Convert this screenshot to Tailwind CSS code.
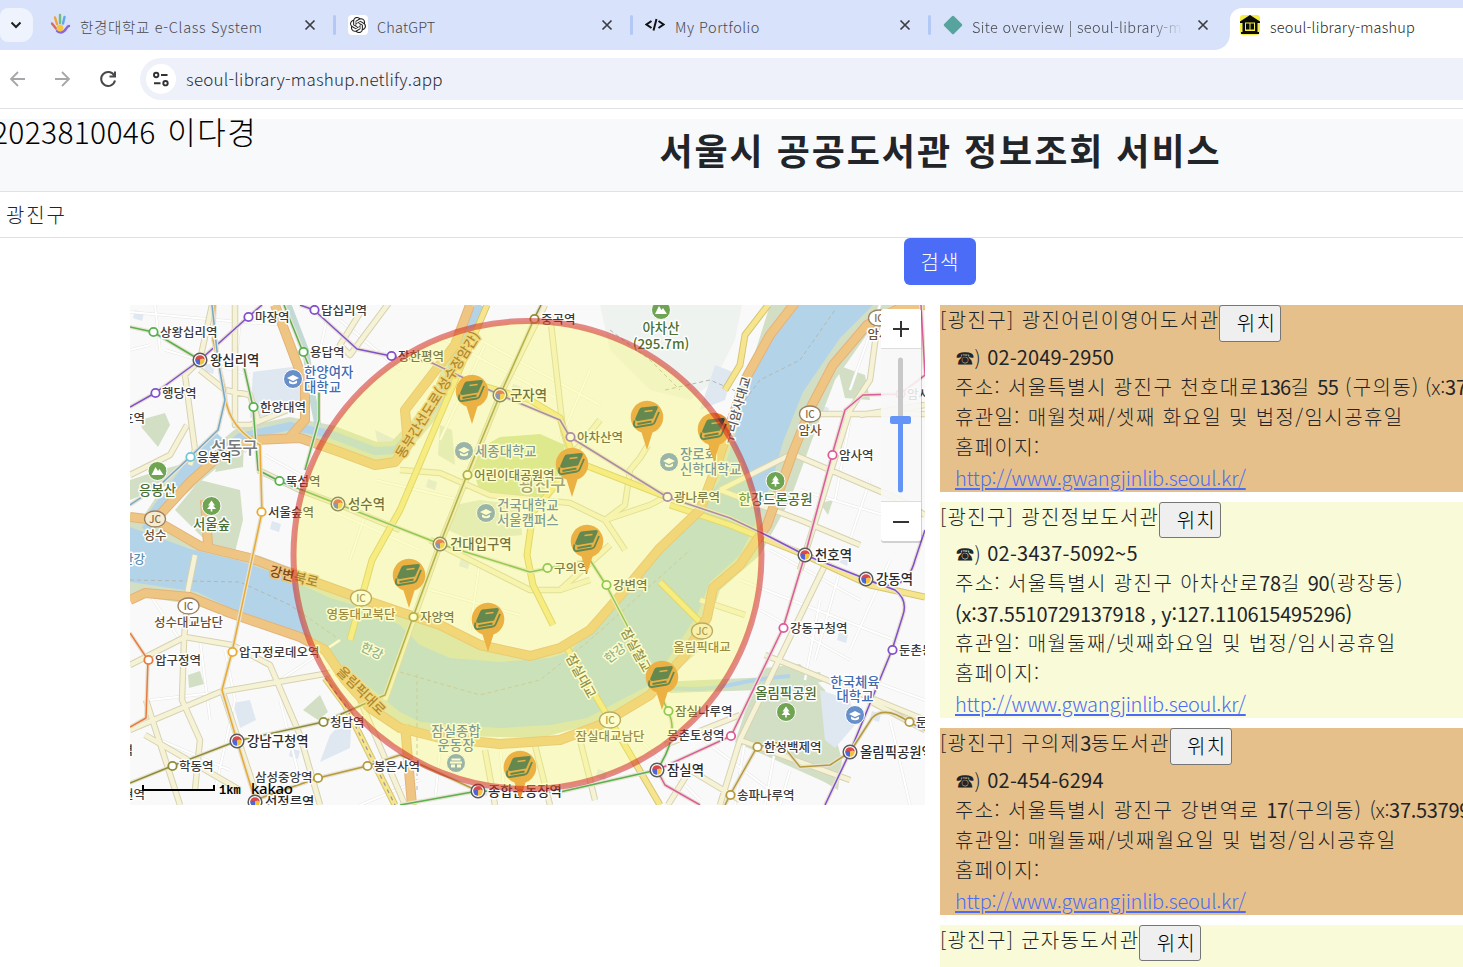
<!DOCTYPE html>
<html lang="ko">
<head>
<meta charset="utf-8">
<title>seoul-library-mashup</title>
<script src="https://cdn.jsdelivr.net/npm/@tailwindcss/browser@4"></script>
</head>
<body class="w-[1463px] h-[967px] overflow-hidden bg-white font-['Noto_Sans_CJK_KR',sans-serif] font-light text-[#212529]">
<div class="relative flex h-[967px] flex-col overflow-hidden">

  <!-- Tab strip -->
  <div class="flex h-[50px] shrink-0 bg-[#d8e2fa] text-[14.5px] text-[#46484c]">
    <div class="mt-2 flex h-[34px] w-[33px] items-center justify-center rounded-r-xl rounded-l-lg bg-[#eff3fd] pr-0.5">
      <svg width="12" height="8" viewBox="0 0 12 8" fill="none" stroke="#1f1f1f" stroke-width="2"><path d="M1.5 1.5 6 6l4.500-4.500"/></svg>
    </div>
    <div class="flex w-[303px] items-center pl-[17px]">
      <svg width="21" height="22" viewBox="0 0 21 22" fill="none" stroke-width="2.400" stroke-linecap="round" class="-mt-0.5 shrink-0"><path d="M10 2v8" stroke="#6fc078"/><path d="M5 4.500 7 11" stroke="#f0a13c"/><path d="M14.500 4 13 10.500" stroke="#64a6ee"/><path d="m2 10.500 4 5" stroke="#dc6a5e"/><path d="M19 13c-3 0-2.500 6-8 6.500-2 0-3-.5-4-1.500" stroke="#8a66d6"/><circle cx="10" cy="15" r="2.200" fill="#f6c441" stroke="#f6c441"/></svg>
      <span class="ml-[9px] flex-1 whitespace-nowrap pt-1 tracking-[0.68px]">한경대학교 e-Class System</span>
      <svg width="12" height="12" viewBox="0 0 12 12" stroke="#3c3e42" stroke-width="1.700" class="mr-[17px] shrink-0"><path d="m1.500 1.500 9 9m0-9-9 9"/></svg>
      <i class="h-5 w-[3px] rounded bg-[#b3c8f5]"></i>
    </div>
    <div class="flex w-[297px] items-center pl-3">
      <span class="flex size-5 items-center justify-center rounded bg-white"><svg width="16" height="16" viewBox="0 0 24 24" fill="#202020"><path d="M22.282 9.821a5.985 5.985 0 0 0-.516-4.910 6.046 6.046 0 0 0-6.510-2.900A6.065 6.065 0 0 0 4.981 4.180a5.985 5.985 0 0 0-3.998 2.900 6.046 6.046 0 0 0 .743 7.097 5.980 5.980 0 0 0 .510 4.911 6.051 6.051 0 0 0 6.515 2.900A5.985 5.985 0 0 0 13.260 24a6.056 6.056 0 0 0 5.772-4.206 5.990 5.990 0 0 0 3.998-2.900 6.056 6.056 0 0 0-.748-7.073zM13.260 22.430a4.476 4.476 0 0 1-2.876-1.040l.141-.081 4.779-2.758a.795.795 0 0 0 .393-.681v-6.737l2.020 1.169a.071.071 0 0 1 .038.052v5.583a4.504 4.504 0 0 1-4.495 4.494zM3.600 18.304a4.470 4.470 0 0 1-.535-3.014l.142.085 4.783 2.759a.771.771 0 0 0 .780 0l5.843-3.369v2.332a.080.080 0 0 1-.033.062L9.740 19.950a4.500 4.500 0 0 1-6.140-1.646zM2.340 7.896a4.485 4.485 0 0 1 2.366-1.973V11.600a.766.766 0 0 0 .388.677l5.815 3.355-2.020 1.168a.076.076 0 0 1-.071 0l-4.830-2.786A4.504 4.504 0 0 1 2.340 7.872zm16.597 3.855-5.833-3.387L15.119 7.200a.076.076 0 0 1 .071 0l4.830 2.791a4.494 4.494 0 0 1-.676 8.105v-5.678a.790.790 0 0 0-.407-.667zm2.010-3.023-.141-.085-4.774-2.782a.776.776 0 0 0-.785 0L9.409 9.230V6.897a.066.066 0 0 1 .028-.061l4.830-2.787a4.500 4.500 0 0 1 6.680 4.660zm-12.640 4.135-2.020-1.164a.080.080 0 0 1-.038-.057V6.075a4.500 4.500 0 0 1 7.375-3.453l-.142.080L8.704 5.460a.795.795 0 0 0-.393.681zm1.097-2.365 2.602-1.500 2.607 1.500v2.999l-2.597 1.500-2.607-1.500Z"/></svg></span>
      <span class="ml-[7px] flex-1 whitespace-nowrap pt-1 pl-0.5 tracking-[0.200px]">ChatGPT</span>
      <svg width="12" height="12" viewBox="0 0 12 12" stroke="#3c3e42" stroke-width="1.700" class="mr-[17px] shrink-0"><path d="m1.500 1.500 9 9m0-9-9 9"/></svg>
      <i class="h-5 w-[3px] rounded bg-[#b3c8f5]"></i>
    </div>
    <div class="flex w-[298px] items-center pl-3">
      <svg width="20" height="14" viewBox="0 0 20 14" fill="none" stroke="#111" stroke-width="2"><path d="M6.500 3 1.500 6.500l5 3.500M13.500 3l5 3.500-5 3.500M11.500 1 8.500 12.500"/></svg>
      <span class="ml-2.5 flex-1 whitespace-nowrap pt-1 tracking-[0.5px]">My Portfolio</span>
      <svg width="12" height="12" viewBox="0 0 12 12" stroke="#3c3e42" stroke-width="1.700" class="mr-[17px] shrink-0"><path d="m1.500 1.500 9 9m0-9-9 9"/></svg>
      <i class="h-5 w-[3px] rounded bg-[#b3c8f5]"></i>
    </div>
    <div class="flex w-[299px] items-center rounded-br-2xl pl-[11px]">
      <svg width="22" height="22" viewBox="0 0 22 22" class="shrink-0"><rect x="4" y="4" width="14" height="14" rx="1.500" fill="#57a39d" transform="rotate(45 11 11)"/></svg>
      <span class="ml-2 mr-[14px] w-[211px] overflow-hidden whitespace-nowrap pt-1 tracking-[0.32px] [mask-image:linear-gradient(to_right,black_85%,transparent)]">Site overview | seoul-library-mashup</span>
      <svg width="12" height="12" viewBox="0 0 12 12" stroke="#3c3e42" stroke-width="1.700" class="shrink-0"><path d="m1.500 1.500 9 9m0-9-9 9"/></svg>
    </div>
    <div class="relative mt-2 flex h-[42px] flex-1 items-center rounded-tl-xl bg-white pl-[10px] pb-2">
      <svg width="16" height="16" viewBox="0 0 16 16" class="absolute bottom-0 -left-4"><path d="M16 0v16H0C9 16 16 9 16 0Z" fill="#fff"/></svg>
      <svg width="20" height="20" viewBox="0 0 20 20"><rect width="20" height="20" rx="3" fill="#f2ee45"/><path d="M0 6.500 10 0l10 6.500V8H17.500v9H19v2H1v-2h1.500V8H0Z" fill="#0b0b0b"/><path d="M5 7.500h10v8.500h-10Z" fill="#f2ee45"/><path d="M6 8.500h3.500v6H6Zm4.500 0H14v6h-3.500Z" fill="#0b0b0b"/></svg>
      <span class="ml-[10px] whitespace-nowrap pt-[3px] tracking-[0.23px] text-[#1f1f1f]">seoul-library-mashup</span>
    </div>
  </div>

  <!-- Address bar -->
  <div class="flex h-[59px] shrink-0 items-center border-b border-[#dfe1e5] bg-white pl-[9px]">
    <svg width="18" height="18" viewBox="0 0 18 18" fill="none" stroke="#a5a7aa" stroke-width="1.800"><path d="M16 9H2M9 2 2 9l7 7"/></svg>
    <svg width="18" height="18" viewBox="0 0 18 18" fill="none" stroke="#a5a7aa" stroke-width="1.800" class="ml-[26px]"><path d="M2 9h14M9 2l7 7-7 7"/></svg>
    <svg width="18" height="18" viewBox="0 0 18 18" fill="none" stroke="#46484c" stroke-width="2" class="ml-[28px]"><path d="M15.300 5.500A7 7 0 1 0 16 10.500M16 1.500V6.500H10.500"/></svg>
    <div class="ml-[23px] flex h-[42px] flex-1 items-center rounded-l-full bg-[#eef1fa] pl-1.5">
      <span class="flex size-[30px] items-center justify-center rounded-full bg-white"><svg width="18" height="18" viewBox="0 0 18 18" fill="none" stroke="#303236" stroke-width="1.900"><circle cx="4.200" cy="5" r="2.200"/><path d="M9 5h6.500M2 13.200h6.500"/><circle cx="13.500" cy="13.200" r="2.200"/></svg></span>
      <span class="ml-[10px] whitespace-nowrap text-[17px] tracking-[0.2px] text-[#2b2d30]">seoul-library-mashup.netlify.app</span>
    </div>
  </div>

  <!-- Page header -->
  <header class="relative mt-[10px] flex h-[73px] shrink-0 justify-center border-b border-[#dee2e6] bg-[#f8f9fa] pl-[418px]">
    <h1 class="whitespace-nowrap text-[36px]/[61px] font-bold tracking-[1.950px] text-[#212529]">서울시 공공도서관 정보조회 서비스</h1>
    <div class="absolute -top-[11px] -left-[8px] whitespace-nowrap text-[30px]/[46px] text-black tracking-[0.300px]">2023810046 <span class="pl-[3px] text-[31px] tracking-[1.500px]">이다경</span></div>
  </header>
  <div class="flex h-[46px] shrink-0 items-center border-b border-[#dee2e6] pl-[6px] text-[20px] tracking-[1.800px]">광진구</div>
  <div class="flex h-[67px] shrink-0 items-start pl-[904px]">
    <button class="h-[47px] w-[72px] rounded-md bg-[#4a6cf7] text-[20px] tracking-[1.200px] text-white">검색</button>
  </div>

  <main class="flex flex-1 pl-[130px]">
    <!-- Map -->
    <div class="h-[500px] w-[795px] shrink-0 overflow-hidden bg-[#f9f9f9]">
      <svg id="map" width="795" height="500" viewBox="130 305 795 500" font-family="'Noto Sans CJK KR',sans-serif">
        <g id="base"></g>
        <g id="roads" fill="none" stroke-linejoin="round"></g>
        <g id="rails" fill="none" stroke-linejoin="round"></g>
        <g id="labels"></g>
        <g id="pins"></g>
        <circle cx="527.500" cy="555" r="234" fill="#f8f864" fill-opacity=".35" stroke="#cf1f1f" stroke-opacity=".52" stroke-width="6"/>
        <!-- scale -->
        <path d="M143 785v6M143 790H214M214 785v6" stroke="#000" stroke-width="2" fill="none"/>
        <text x="219" y="794" font-size="12" font-weight="700" font-family="'Liberation Mono'">1km</text>
        <text x="251" y="794" font-size="15" font-weight="500" font-family="'Noto Sans'" textLength="42">kakao</text>
        <!-- zoom control -->
        <g>
          <rect x="881" y="310" width="41" height="233" rx="3" fill="#000" opacity=".16"/>
          <rect x="881" y="309" width="40" height="232" rx="3" fill="#fff" fill-opacity=".85"/>
          <path d="M881 312a3 3 0 0 1 3-3H918a3 3 0 0 1 3 3V348H881ZM881 502h40v36a3 3 0 0 1-3 3H884a3 3 0 0 1-3-3Z" fill="#fff"/>
          <path d="M881 348.500h40M881 501.500h40" stroke="#ddd"/>
          <path d="M893 329h16M901 321v16M893 522h16" stroke="#333" stroke-width="2"/>
          <path d="M900.500 360v60" stroke="#c8c8c8" stroke-width="5" stroke-linecap="round"/>
          <path d="M900.500 420v70" stroke="#6495f6" stroke-width="5" stroke-linecap="round"/>
          <rect x="890" y="416" width="21" height="8" rx="2" fill="#6495f6"/>
        </g>
      </svg>
    </div>

    <!-- Library list -->
    <div class="ml-[15px] flex w-[600px] shrink-0 flex-col gap-[10px] text-[20px]/[30px] tracking-[1.380px] whitespace-nowrap">
      <section class="h-[187px] shrink-0 bg-[#e6c08a]">
        <div class="flex h-[37px]"><span>[광진구] 광진어린이영어도서관</span><button class="h-[37px] w-[62px] rounded-[3px] border border-[#767676] bg-[#efefef] pb-0.5 pl-3 tracking-[1.200px] text-black">위치</button></div>
        <div class="pl-[15px]">
          <p><span class="font-['DejaVu_Sans'] tracking-[-0.5px]">☎</span><span class="tracking-[1px]">) <span class="font-normal tracking-[0.150px]">02-2049-2950</span></span></p>
          <p class="-translate-y-px">주소: 서울특별시 광진구 천호대로<span class="font-normal tracking-[-0.700px]">136</span>길 <span class="font-normal tracking-[-0.700px]">55</span> (구의동)<span class="tracking-[-0.200px]"> (x:<span class="font-normal">37.5449</span></span></p>
          <p class="-translate-y-px">휴관일: 매월첫째/셋째 화요일 및 법정/임시공휴일</p>
          <p class="-translate-y-px">홈페이지:</p>
          <p><a class="text-[#4a6cf7] underline decoration-2 underline-offset-2 tracking-[-0.250px]">http://www.gwangjinlib.seoul.kr/</a></p>
        </div>
      </section>
      <section class="h-[216px] shrink-0 bg-[#f9fad7]">
        <div class="flex h-[36px]"><span class="tracking-[1.320px]">[광진구] 광진정보도서관</span><button class="h-[36px] w-[62px] rounded-[3px] border border-[#767676] bg-[#efefef] pl-3 tracking-[1.200px] text-black">위치</button></div>
        <div class="pl-[15px]">
          <p><span class="font-['DejaVu_Sans'] tracking-[-0.5px]">☎</span><span class="tracking-[1px]">) <span class="font-normal tracking-[0.250px]">02-3437-5092~5</span></span></p>
          <p class="-translate-y-px">주소: 서울특별시 광진구 아차산로<span class="font-normal tracking-[-0.300px]">78</span>길 <span class="font-normal tracking-[-0.300px]">90</span>(광장동)</p>
          <p class="font-normal tracking-[-0.220px]">(x:37.5510729137918 , y:127.110615495296)</p>
          <p class="-translate-y-px">휴관일: 매월둘째/넷째화요일 및 법정/임시공휴일</p>
          <p class="-translate-y-px">홈페이지:</p>
          <p><a class="text-[#4a6cf7] underline decoration-2 underline-offset-2 tracking-[-0.250px]">http://www.gwangjinlib.seoul.kr/</a></p>
        </div>
      </section>
      <section class="h-[187px] shrink-0 bg-[#e6c08a]">
        <div class="flex h-[37px]"><span class="tracking-[1.300px]">[광진구] 구의제<span class="font-normal tracking-[-0.500px]">3</span>동도서관</span><button class="h-[37px] w-[62px] rounded-[3px] border border-[#767676] bg-[#efefef] pb-0.5 pl-3 tracking-[1.200px] text-black">위치</button></div>
        <div class="pl-[15px]">
          <p><span class="font-['DejaVu_Sans'] tracking-[-0.5px]">☎</span><span class="tracking-[1px]">) <span class="font-normal tracking-[0.250px]">02-454-6294</span></span></p>
          <p class="-translate-y-px">주소: 서울특별시 광진구 강변역로 <span class="font-normal tracking-[-0.300px]">17</span>(구의동) <span class="tracking-[-0.300px]">(x:<span class="font-normal">37.537991</span></span></p>
          <p class="-translate-y-px">휴관일: 매월둘째/넷째월요일 및 법정/임시공휴일</p>
          <p class="-translate-y-px">홈페이지:</p>
          <p><a class="text-[#4a6cf7] underline decoration-2 underline-offset-2 tracking-[-0.250px]">http://www.gwangjinlib.seoul.kr/</a></p>
        </div>
      </section>
      <section class="h-[187px] shrink-0 bg-[#f9fad7]">
        <div class="flex h-[36px]"><span class="tracking-[1.300px]">[광진구] 군자동도서관</span><button class="h-[36px] w-[62px] rounded-[3px] border border-[#767676] bg-[#efefef] pl-3 tracking-[1.200px] text-black">위치</button></div>
      </section>
    </div>
  </main>
</div>

<script>
const el = id => document.getElementById(id);
const path = (d, c, w, extra = '') => `<path d="${d}" stroke="${c}" stroke-width="${w}" ${extra}/>`;

/* Land use and water */
const green = '#d3dfc4', water = '#b3d4e8', campus = '#dfe8f1';
const areas = [
  ['M600 305H742L735 340 715 380 690 400 650 390 610 350Z', '#eff3ef'],
  ['M253 372 300 366 302 400 290 413 250 418Z M375 430 396 440 380 455Z', campus],
  ['M140 420 165 413 170 425 158 447 142 428Z M222 450 244 440 243 467 215 472Z', green],
  ['M130 480 160 470 190 462 168 485 130 500Z M175 510 200 480 240 490 243 520 235 552 210 545Z', green],
  ['M480 448 500 437 540 434 565 445 560 470 548 500 520 498 480 492 473 470Z', '#cfe0a4'],
  ['M455 505 480 500 520 505 522 535 470 540 448 530Z M440 425 452 430 455 465 438 455Z', '#dbe6da'],
  ['M130 515 190 540 260 556 400 608 480 642 530 657 570 645 610 605 660 550 710 500 740 400 770 305H925L870 330 835 380 812 440 790 500 760 555 720 590 700 650 650 695 600 722 540 738 420 735 370 705 320 648 230 610 130 595Z', green],
  ['M130 527 190 549 240 561 280 575 330 598 363 608 400 625 420 645 450 658 500 662 550 658 570 652 600 618 650 562 690 520 720 480 740 420 743 388 757 348 790 305H873L840 338 803 392 783 442 773 478 757 520 740 555 710 582 697 615 673 652 650 685 617 702 587 718 550 725 500 728 467 726 420 722 400 712 363 682 330 662 317 645 290 635 230 608 197 592 130 582Z', water],
  ['M330 735 352 712 350 748 320 762Z M233 703 250 700 256 720 240 728Z', campus],
  ['M188 675 200 671 204 684 189 688Z M303 710 320 695 328 712 318 720Z', green],
  ['M772 670 800 666 822 688 842 760 838 790 745 735 757 715Z', green],
  ['M765 668 800 664 825 690 835 745 838 788 735 742 745 712Z', green],
  ['M820 690 850 700 855 725 835 748 825 740Z', campus],
  ['M837 365 865 375 870 400 845 398Z M820 503 833 500 828 515Z', green],
  ['M715 365 733 372 725 400 700 410Z M833 551 850 556 847 566 834 560Z', campus],
  ['M660 682 790 676 820 672 822 682 760 690 670 693Z', '#d0e0c4'],
];
for (let i = 0; i < 26; i++) {
  const x = 135 + (i * 137) % 770, y = 310 + (i * 211) % 480;
  const inRiver = x > 240 && x < 760 && y > 560 && y < 740;
  if (!inRiver) areas.unshift([`M${x} ${y}l9 3-2 8-9-3Z`, campus]);
}
const stream = 'M480 305 458 350 440 400 415 430 396 450 375 451 330 434 290 426 240 437 200 470 165 500 145 530';
el('base').innerHTML = areas.map(([d, c]) => `<path d="${d}" fill="${c}"/>`).join('') +
  path(stream, green, 18, 'fill="none" stroke-linejoin="round"') + path(stream, water, 8, 'fill="none" stroke-linejoin="round"') +
  path('M220 436 195 462 170 495 152 520', water, 14, 'fill="none"') +
  path('M288 305 306 352 312 395 318 425', '#c3d9d3', 7, 'fill="none"') +
  path('M660 687Q700 692 730 685T790 676', water, 4, 'fill="none"') +
  path('M130 580 240 582 290 605 340 640 M400 672 480 695 540 680 590 640 690 550 M417 674V790 M745 400 760 380 800 360 835 310 M665 390 710 380 745 395 M610 330 650 360 680 390', '#b5b7ae', 1, 'fill="none" stroke-dasharray="4 3"');

/* Roads: minor white streets, cream arterials, yellow main roads, orange expressways */
const minor = [
  'M130 312 240 322 290 325','M155 305 160 350','M165 350 250 375','M240 320 235 375','M130 350 150 345','M340 320 400 370','M320 350 330 305',
  'M265 455 310 480','M330 510 420 550','M350 560 370 500','M445 340 560 400','M590 370 560 440',
  'M485 345 440 440','M480 340 600 405','M375 480 460 500','M430 590 520 615','M480 560 470 630',
  'M150 595 180 640','M200 640 210 720','M225 650 235 700 215 790','M150 700 240 690','M160 740 230 770','M280 700 300 780','M340 640 280 680','M250 660 330 650',
  'M440 750 435 800','M500 745 505 800','M420 780 360 805','M640 740 700 800','M740 580 920 650','M760 610 850 660',
  'M770 550 860 600','M890 560 850 650','M840 570 815 660','M800 490 900 520','M850 420 835 500','M870 480 850 540','M745 740 735 805',
  'M775 750 765 805','M870 680 925 700','M690 730 770 790','M790 770 780 805','M890 720 910 805','M820 600 805 680','M880 305 850 390'];
const arterial = [
  'M212 305 200 360 185 375 195 450 190 465','M200 370 225 390 250 395 258 420','M130 475 170 455 187 425','M235 305V365L235 425 250 425 300 405','M258 470 300 490 340 505 400 530',
  'M365 305 340 345 350 355 391 300','M195 555 188 590 184 640 182 700 200 740 195 790','M130 665 185 637 232 645 270 665 300 735 320 805','M130 730 220 692 330 673','M146 700 180 805','M222 690 240 745 260 805',
  'M550 315 563 430 575 470','M545 305 500 395 440 544 385 700','M400 470 440 473 490 495 570 503 605 520 625 550','M605 520 650 505 665 497','M648 445 640 458 630 470 625 505 605 520','M600 420 560 470',
  'M560 590 610 545','M430 540 530 590 560 590 590 580','M485 750 495 805','M535 745 550 805','M580 740 595 800','M720 490 800 520 860 545','M700 600 745 615',
  'M825 565 740 740 720 805','M765 655 790 665','M795 455 900 500 925 515','M860 415 925 405','M820 414H925','M878 320 870 380 850 410 800 570','M720 490 790 455','M740 740 850 780','M665 745 740 715',
  'M668 805 690 770 740 800','M790 665 925 720','M868 700 925 730','M145 735 240 790','M360 700 405 805'];
const main = [
  'M487 305 400 510 372 560 350 640','M480 385 530 400 560 418 575 462 533 512 527 555 533 585 553 625','M567 648 610 720 660 805','M577 462 667 497','M670 505 730 525 805 555 870 585 925 597',
  'M768 305 745 335 740 365 725 390','M660 582 700 622'];
const highway = [
  'M130 517 155 520 200 546 250 558 300 577 365 600 400 612 440 625 480 645 530 656 560 648 590 630 625 590 660 548 700 510 715 470 745 380 770 335 795 303',
  'M130 600 145 593 190 597 230 613 300 637 325 650 345 680 370 708 400 728 440 738 500 744 560 740 600 725 650 695 685 655 707 618 713 588 740 565 767 525 793 452 812 405 833 365 867 325 900 308 925 305',
  'M155 520 190 482 220 455 255 440 300 438 340 452 375 465 395 462 408 445 405 410 455 345 470 305',
  'M275 305 305 385 305 420 290 437','M205 500 208 545','M405 725 412 805'];
const layer = (list, casing, cw, fill, fw) => path(list.join(''), casing, cw) + path(list.join(''), fill, fw);
el('roads').innerHTML = layer(minor, '#e6e7e3', 3, '#ffffff', 2) + layer(arterial, '#d6d2b2', 6.5, '#f6f2d6', 4.500) +
  layer(main, '#d5c671', 7, '#f6e58e', 5) + layer(highway, '#e3b37a', 10, '#efc583', 8) +
  layer(['M325 678 345 705 375 765 395 805'], '#d5c671', 7, '#f6e58e', 5) + path('M325 678 345 705 375 765 395 805', '#999', 1.200, 'stroke-dasharray="4 4"');

/* Subway */
const rails = [
  ['M130 407 155 393 200 360 248 317 262 305M300 305 314 310 357 349 391 356 430 362 500 395 560 420 570 437 667 497 730 518 770 537 805 555 866 579 895 590Q908 600 903 615L892 650 850 752 825 805M866 579Q905 598 915 560L925 530', '#8250cc'],
  ['M130 327 153 332 200 360M244 367 253 407 258 470 279 481 338 504 440 544 530 572 590 560 606 585 640 650 668 711Q680 735 657 770L560 792 478 791 400 805M284 305 303 352 319 390V420L305 470', '#59b04e'],
  ['M541 305 534 319 500 395 467 475 440 544 413 617 385 695 323 722 237 741 172 766 130 783', '#8c8d36'],
  ['M215 305 213 340 225 390Q225 425 260 445L262 512 232 652 222 690 237 741 255 800', '#e8ab32'],
  ['M212 305 218 360 225 400 218 430 190 457 160 485 130 505', '#76a9c9'],
  ['M921 305 925 375 900 394 863 395 845 410 832 455 805 555 783 628 731 736 657 770 665 785 700 805', '#dc5c9b'],
  ['M400 755 367 766 318 778 255 800M757 747 780 742 800 767 830 765 850 752 872 718Q885 705 909 722L925 730M757 747 730 795 725 805M400 755 478 791', '#b59b3b'],
  ['M130 633 148 660 146 718 130 727', '#e87a3e'],
];
el('rails').innerHTML = rails.map(([d, c]) => path(d, '#e7e2d2', 4) + path(d, c, 1.500)).join('');

const P = '#8250cc', G = '#59b04e', O = '#8c8d36', Y = '#e8ab32', K = '#dc5c9b', B = '#b59b3b', H = null;
/* [x, y, label, colour]; null colour marks an interchange */
const stations = [
  [248,317,'마장역',P],[314,310,'답십리역',P],[153,332,'상왕십리역',G],[303,352,'용답역',G],[391,356,'장한평역',P],[200,360,'왕십리역',H],[155,393,'행당역',P],[253,407,'한양대역',G],
  [190,457,'응봉역','#72c7d6'],[279,481,'뚝섬역',G],[338,504,'성수역',H],[261,512,'서울숲역',Y],[534,319,'중곡역',O],[500,395,'군자역',H],[570,437,'아차산역',P],[467,475,'어린이대공원역',O],
  [440,544,'건대입구역',H],[547,568,'구의역',G],[606,585,'강변역',G],[413,617,'자양역',O],[667,497,'광나루역',P],[832,455,'암사역',K],[805,555,'천호역',H],[866,579,'강동역',H],
  [783,628,'강동구청역',K],[892,650,'둔촌동역',P],[909,722,'둔촌오륜역',B],[757,747,'한성백제역',B],[850,752,'올림픽공원역',H],[730,795,'송파나루역',B],[657,770,'잠실역',H],[668,711,'잠실나루역',G],
  [478,791,'종합운동장역',H],[367,766,'봉은사역',B],[255,802,'선정릉역',H],[172,766,'학동역',O],[237,741,'강남구청역',H],[323,722,'청담역',O],[232,652,'압구정로데오역',Y],[148,660,'압구정역','#e87a3e'],[900,394,'암사역사공원역',K],
];
const halo = 'stroke="#fff" stroke-width="3" stroke-linejoin="round" paint-order="stroke"';
const text = (x, y, s, size, c, extra = '') => `<text x="${x}" y="${y}" font-size="${size}" font-weight="500" fill="${c}" ${halo} ${extra}>${s}</text>`;
let out = '';
out += text(211, 454, '성동구', 17, '#77797c') + text(519, 491, '광진구', 17, '#77797c');
for (const [x, y, s, c] of stations) {
  if (c) out += `<circle cx="${x + .5}" cy="${y}" r="4.200" fill="#fff" stroke="${c}" stroke-width="1.800"/>` + text(x + 7, y + 5, s, 12.500, '#3c3c3c');
  else out += `<circle cx="${x}" cy="${y}" r="6.800" fill="#fff" stroke="#5a5a5a" stroke-width="1.500"/><path d="M${x - 4.800} ${y}a4.800 4.800 0 0 1 9.600 0q-2.400-2.400-4.800 0Z" fill="#db4848"/><path d="M${x - 4.800} ${y}a4.800 4.800 0 0 0 4.800 4.800V${y}q-2.400-2.400-4.800 0Z" fill="#4f66d8"/><path d="M${x} ${y + 4.800}a4.800 4.800 0 0 0 4.800-4.800q-2.400-2.400-4.800 0Z" fill="#f3c33c"/>` + text(x + 10, y + 5, s, 13.400, '#2c2c2c');
}
const brown = '#6a5236', grn = '#497032', blue = '#3f6bb3';
[[810,414,'IC','암사'],[879,318,'IC','암사'],[188.5,606,'IC','성수대교남단'],[361,598,'IC','영동대교북단'],[610,720,'IC','잠실대교남단'],[155,519,'JC','성수'],[702,631,'JC','올림픽대교']].forEach(([x, y, k, s]) => {
  out += `<ellipse cx="${x}" cy="${y}" rx="10.500" ry="8" fill="${k === 'JC' ? '#f8ecd0' : '#fff'}" stroke="#9a8262" stroke-width="1.300"/><text x="${x}" y="${y + 3.500}" font-size="10" font-weight="500" fill="#84694a" text-anchor="middle">${k}</text>` + text(x, y + 21, s, 12.500, brown, 'text-anchor="middle"');
});
/* parks, peaks and campuses */
const badge = (x, y, kind) => {
  const c = kind === 'uni' || kind === 'arena' ? '#6790cb' : '#6fa552';
  const g = {
    tree: 'M0-5.500-3.500-.5h2L-4.500 3H-.8V5.500H.8V3H4.500L1.500-.5h2Z',
    peak: 'M-6 4-2-4 .5 0 2-2 6 4Z',
    uni: 'M-6-1 0-4 6-1 0 2ZM-4 1.500V4Q0 6.500 4 4V1.500L0 3.500Z',
    arena: 'M-4.500-4.500H4.500V-2.500H-4.500ZM-6-1.500H6V.500H-6ZM-5 1.500H-1V4.500H-5ZM1 1.500H5V4.500H1Z',
  }[kind];
  return `<circle cx="${x}" cy="${y}" r="9.500" fill="${c}" stroke="#fff"/><path transform="translate(${x} ${y})" d="${g}" fill="#fff"/>`;
};
[[157.5,471,'peak'],[211.5,506,'tree'],[661,310,'peak'],[775.5,481,'tree'],[786,712,'tree'],[293,379,'uni'],[464,451,'uni'],[486,513,'uni'],[669,462,'uni'],[855,715,'uni'],[456,763,'arena']].forEach(b => out += badge(...b));
const mid = 'text-anchor="middle"';
[[157.5,495,'응봉산',grn],[211.5,529,'서울숲',grn],[661,333,'아차산',grn],[661,349,'(295.7m)',grn],[775.5,504,'한강드론공원',grn],[786,698,'올림픽공원',grn],[855,687,'한국체육',blue],[855,701,'대학교',blue],[456,736,'잠실종합',blue],[456,750,'운동장',blue]]
  .forEach(([x, y, s, c]) => out += text(x, y, s, 13.400, c, mid));
[[304,377,'한양여자'],[304,392,'대학교'],[475,456,'세종대학교'],[497,510,'건국대학교'],[497,525,'서울캠퍼스'],[680,459,'장로회'],[680,474,'신학대학교']]
  .forEach(([x, y, s]) => out += text(x, y, s, 13.400, blue));
out += text(667, 740, '몽촌토성역', 12.500, '#3c3c3c') + text(255, 782, '삼성중앙역', 12.500, '#3c3c3c') +
  `<circle cx="731" cy="736" r="4.200" fill="#fff" stroke="${K}" stroke-width="1.800"/><circle cx="318" cy="778" r="4.200" fill="#fff" stroke="${B}" stroke-width="1.800"/>` +
  text(145, 423, '호역', 12.500, '#3c3c3c', 'text-anchor="end"') + text(133, 755, '역', 12.500, '#3c3c3c', 'text-anchor="end"') + text(145, 799, '현역', 12.500, '#3c3c3c', 'text-anchor="end"') + text(145, 564, '한강', 12.500, '#5a8db3', 'text-anchor="end"');
/* rotated road names: [centre x, centre y, angle, label, size, colour, halo colour] */
[[438,395,-58,'동부간선도로(성수장암간)',13.5,'#8a4d14','#efc583'],[294,577,14,'강변북로',13.500,'#7a4a18','#efc583'],[361,691,45,'올림픽대로',13.500,'#8a4d14','#efc583'],[737,410,-74,'구리암사대교',12.500,'#5c5c5c','#fff'],
 [581,676,61,'잠실대교',13,'#5c5c44','#fff'],[636,650,61,'잠실철교',13,'#5c5c44','#fff'],[372,651,25,'한강',12.500,'#5a8db3','#fff'],[615,653,-38,'한강',12.500,'#5a8db3','#fff']]
  .forEach(([x, y, a, s, z, c, h]) => out += `<text y="4.500" font-size="${z}" font-weight="500" fill="${c}" stroke="${h}" stroke-width="3" stroke-linejoin="round" paint-order="stroke" ${mid} transform="translate(${x} ${y}) rotate(${a})">${s}</text>`);
el('labels').innerHTML = out;

/* Library markers, tip position */
el('pins').innerHTML = [[472,424],[647,450],[714,462],[572,497],[587,574],[409,608],[488,652],[662,710],[520,800]].map(([x, y]) =>
  `<g transform="translate(${x} ${y})"><path d="M0 0-5.500-17.500A16.300 16.300 0 1 1 5.500-17.500Z" fill="#e48b30"/>
  <path d="M-5.500-42.500 9-44Q11.500-44 10.500-41.500L6-31.500-9-29Q-13-29-11.500-32L-8-40Q-7-42.300-5.500-42.500Z" fill="#154c43"/><path d="M-2.500-38.500 5.500-39.500" stroke="#e48b30" stroke-width="1.500"/><path d="M-12.500-29.500Q-14.500-22.500-10-23L5-25.500Q7-26 7.800-28L12-38M-9.500-26 4.500-28.500" stroke="#154c43" stroke-width="1.800" fill="none" stroke-linejoin="round"/></g>`).join('');
</script>
</body>
</html>
